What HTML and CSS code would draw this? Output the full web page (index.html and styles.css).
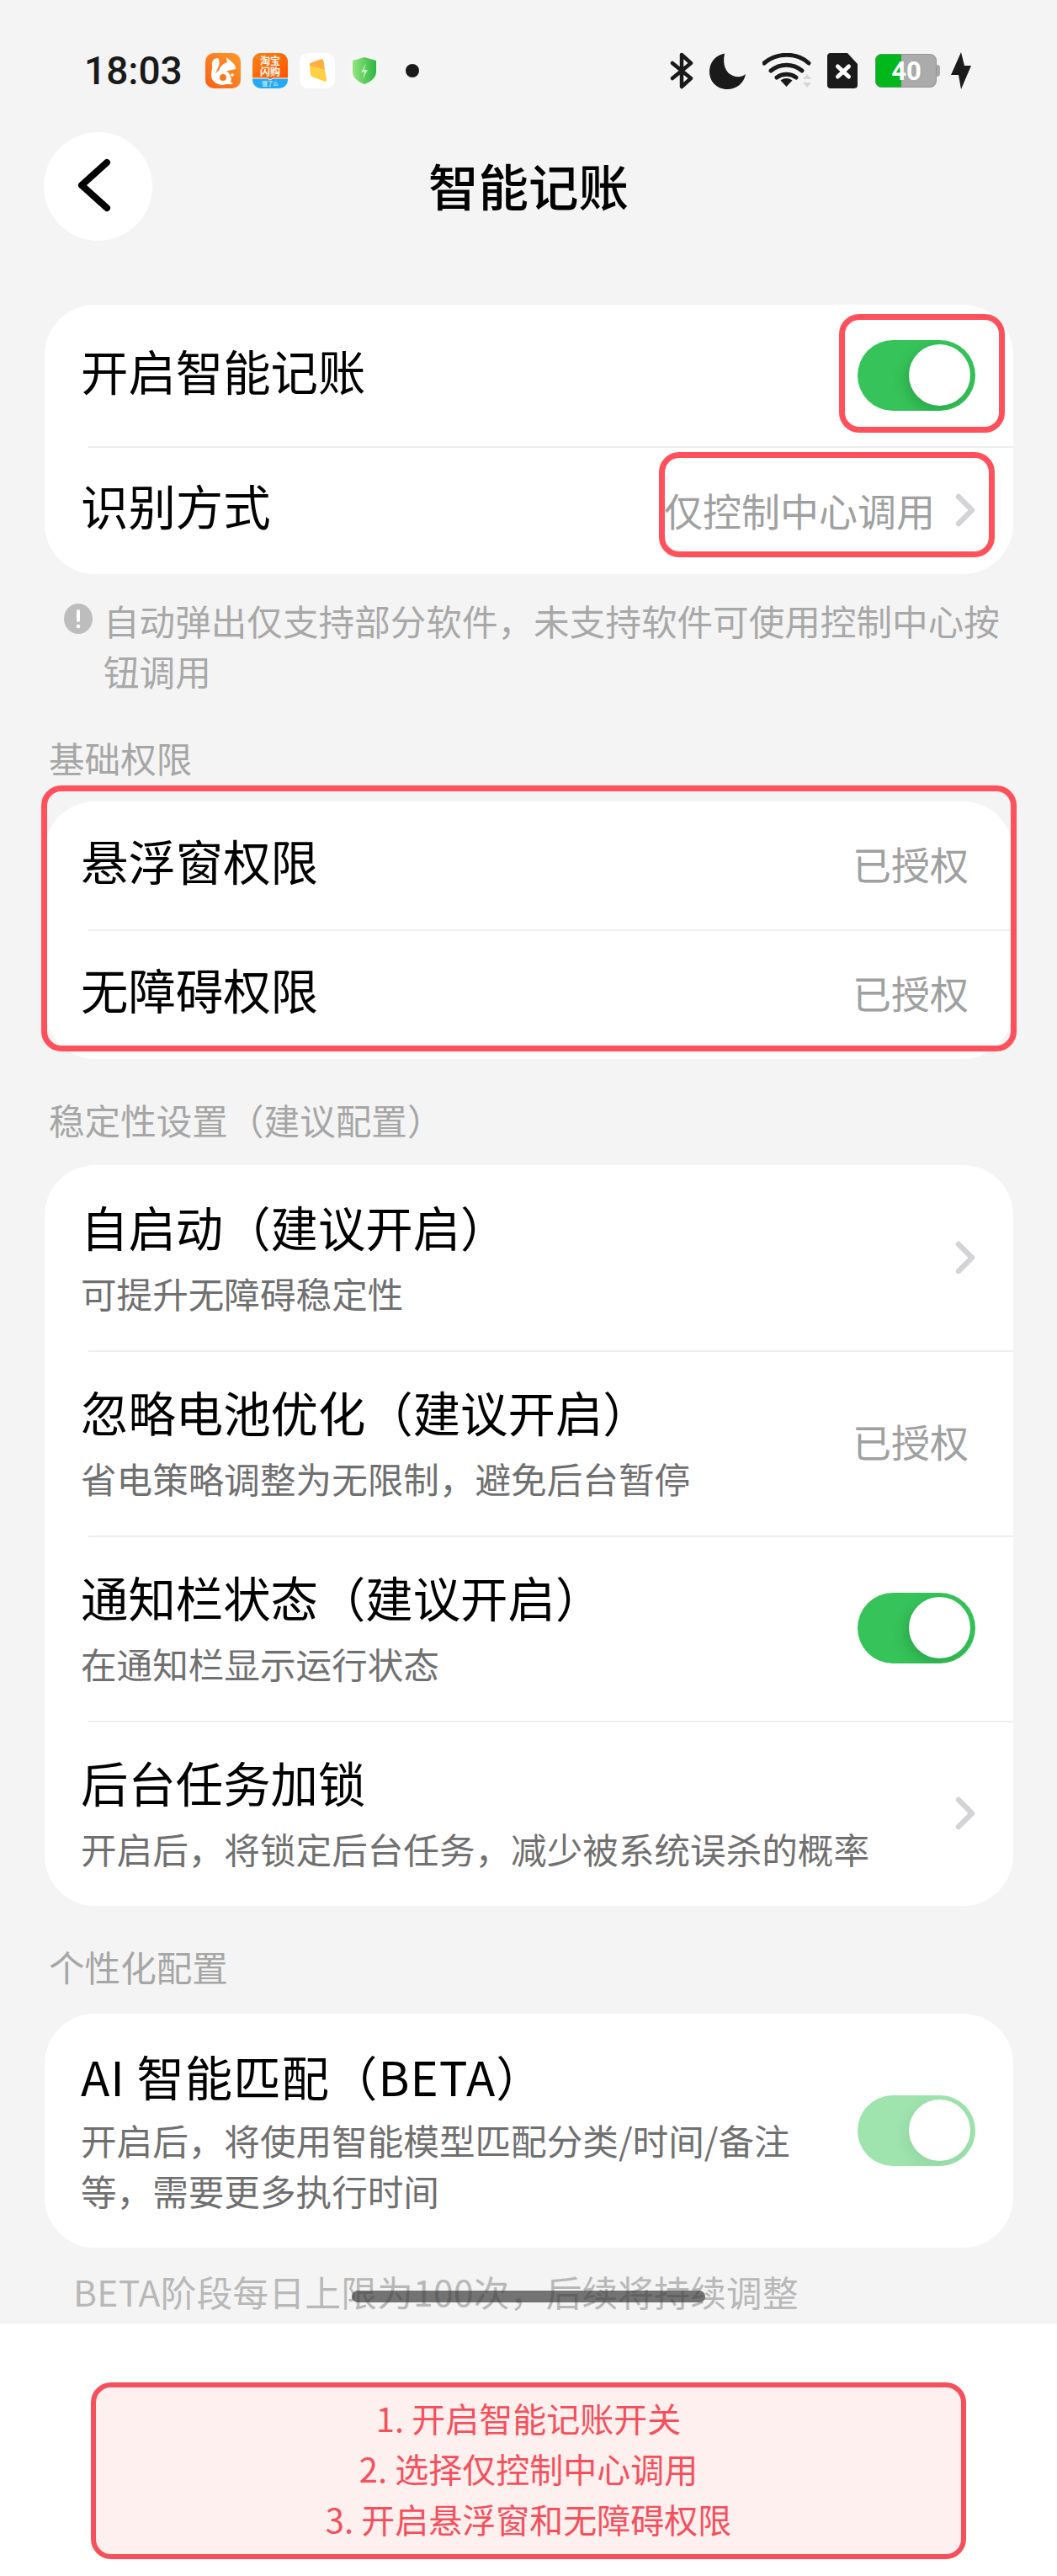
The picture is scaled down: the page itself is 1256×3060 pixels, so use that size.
FILE: index.html
```html
<!DOCTYPE html>
<html lang="zh-CN">
<head>
    <meta charset="UTF-8">
    <meta name="viewport" content="width=device-width, initial-scale=1.0">
    <title>智能记账</title>
    <link rel="stylesheet" href="styles.css">
</head>
<body>
    <div class="page">
        <div class="statusbar">
            <div class="status-left">
                <span class="time">18:03</span>
                <div class="app-icons">
                    <svg class="app-icon" viewBox="0 0 42 42">
                        <defs>
                            <linearGradient id="ucBg" x1="1" y1="0" x2="0" y2="1">
                                <stop offset="0" stop-color="#ff9a2a"/>
                                <stop offset="1" stop-color="#f8601a"/>
                            </linearGradient>
                        </defs>
                        <rect width="42" height="42" rx="10" fill="url(#ucBg)"/>
                        <path d="M15 6C10 6 7 10 8 14c1 4-1 7-1 12 0 6 4 10 10 11-3-3-5-6-5-10 0-5 3-8 4-12 1-3 1-6-1-9z" fill="#fff"/>
                        <path d="M16 21c2-6 6-9 10-10l-1-6 7 6c3 2 4 5 4 8l-9 2c-4 1-8 2-11 0z" fill="#fff"/>
                        <path d="M21 20a9 9 0 1 0 3 17h9l-3-3c1-2 1-4 0-6-1-4-5-8-9-8zm0 5a4 4 0 1 1 0 8 4 4 0 0 1 0-8z" fill="#fff"/>
                        <circle cx="32" cy="26" r="1.8" fill="#fff"/>
                    </svg>
                    <svg class="app-icon" viewBox="0 0 42 42">
                        <defs>
                            <linearGradient id="tbBg" x1="0" y1="0" x2="1" y2="1">
                                <stop offset="0" stop-color="#ff8410"/>
                                <stop offset="1" stop-color="#ff5200"/>
                            </linearGradient>
                            <clipPath id="tbClip"><rect width="42" height="42" rx="10"/></clipPath>
                        </defs>
                        <g clip-path="url(#tbClip)">
                            <rect width="42" height="42" fill="#25a9f2"/>
                            <rect width="42" height="30" fill="url(#tbBg)"/>
                            <path d="M0 30h18l3 2 3-2h18" fill="none" stroke="#fff" stroke-width="1"/>
                        </g>
                        <text class="tb-name" x="21" y="14">淘宝</text>
                        <text class="tb-name" x="21" y="27">闪购</text>
                        <text class="tb-sub" x="21" y="39">饿了么</text>
                    </svg>
                    <svg class="app-icon" viewBox="0 0 42 42">
                        <rect width="42" height="42" rx="10" fill="#fff"/>
                        <path d="M12 13.5c0-1 .5-1.500 1.500-2l11-4c2-.6 3.500 0 4 2l1.500 11-18-5.500z" fill="#fbb03f"/>
                        <path d="M12 15l18 5.500 2 10.500c.3 2-1 3-3 2.500l-13-5c-2-.7-3-1.500-3.200-3.500z" fill="#ffd03f"/>
                    </svg>
                    <svg class="app-icon" viewBox="0 0 42 42">
                        <defs>
                            <linearGradient id="shieldBg" x1="0" y1="0" x2="1" y2="0">
                                <stop offset="0" stop-color="#93e57e"/>
                                <stop offset="1" stop-color="#2db544"/>
                            </linearGradient>
                        </defs>
                        <rect width="42" height="42" rx="10" fill="#f3f6f3"/>
                        <path d="M21 5l14 4v13c0 7-6 12-14 15C13 34 7 29 7 22V9z" fill="url(#shieldBg)"/>
                        <path d="M23 12l-6 11h4l-2 8 6-11h-4z" fill="#b9f0bb"/>
                    </svg>
                </div>
                <span class="status-dot"></span>
            </div>
            <div class="status-right">
                <svg class="ic-bt" viewBox="0 0 28 44">
                    <path d="M3 13l22 18-11 10V3l11 10L3 31" fill="none" stroke="#1a1a1a" stroke-width="4.500" stroke-linejoin="round" stroke-linecap="round"/>
                </svg>
                <svg class="ic-moon" viewBox="0 0 43 43">
                    <path d="M18 .5C6 3 0 12 0 22c0 12 9 21 21 21 11 0 20-7 22-18-5 4-10 4-15 2C20 24 15 15 18 .5z" fill="#1a1a1a"/>
                </svg>
                <svg class="ic-wifi" viewBox="0 0 59 42">
                    <path d="M2 12C17-1 41-1 55 12M10 21c11-9 26-9 37 0M17 29c7-5 16-5 23 0" fill="none" stroke="#1a1a1a" stroke-width="5" stroke-linecap="round"/>
                    <path d="M28.500 30c3 0 5 1 7 2.500l-7 7.500-7-7.500c2-1.500 4-2.500 7-2.500z" fill="#1a1a1a"/>
                    <path d="M53 25l5 6H48zM48 35h10l-5 6z" fill="#d6d6d6"/>
                </svg>
                <svg class="ic-sim" viewBox="0 0 36 42">
                    <path d="M4 0h20l12 13v25c0 2.500-1.500 4-4 4H4c-2.500 0-4-1.500-4-4V4c0-2.500 1.500-4 4-4z" fill="#1a1a1a"/>
                    <path d="M12.500 16l13 12M25.500 16l-13 12" stroke="#fff" stroke-width="5" stroke-linecap="round"/>
                </svg>
                <svg class="ic-battery" viewBox="0 0 78 40">
                    <defs>
                        <clipPath id="batClip"><rect width="73" height="40" rx="8"/></clipPath>
                    </defs>
                    <path d="M73 13c3 0 4 1 4 3v8c0 2-1 3-4 3z" fill="#a9a9a9"/>
                    <g clip-path="url(#batClip)">
                        <rect width="73" height="40" fill="#ababab"/>
                        <rect width="31" height="40" fill="#00b81a"/>
                    </g>
                    <rect x=".5" y=".5" width="72" height="39" rx="8" fill="none" stroke="#888" stroke-opacity=".6"/>
                    <text class="bat-level" x="37" y="31">40</text>
                </svg>
                <svg class="ic-bolt" viewBox="0 0 24 44">
                    <path d="M12 0L0 27h9l3 17 12-28h-8z" fill="#1a1a1a"/>
                </svg>
            </div>
        </div>

        <div class="navbar">
            <div class="back-btn">
                <svg viewBox="0 0 129 129">
                    <path d="M75 36L45 63l30 27" fill="none" stroke="#000" stroke-width="8" stroke-linecap="round" stroke-linejoin="round"/>
                </svg>
            </div>
            <h1 class="nav-title">智能记账</h1>
        </div>

        <div class="card first-card">
            <div class="row row-tall">
                <span class="row-title">开启智能记账</span>
                <span class="toggle"></span>
            </div>
            <div class="row">
                <span class="row-title">识别方式</span>
                <div class="row-right">
                    <span class="row-value">仅控制中心调用</span>
                    <svg class="chevron" viewBox="0 0 24 40"><path d="M4 4l16 16L4 36" fill="none" stroke="#d4d4d8" stroke-width="6.500" stroke-linecap="round" stroke-linejoin="round"/></svg>
                </div>
            </div>
        </div>

        <div class="note">
            <svg class="note-icon" viewBox="0 0 34 36">
                <ellipse cx="17" cy="18" rx="17" ry="18" fill="#bdbdbd"/>
                <rect x="15" y="7" width="4" height="15" rx="2" fill="#fff"/>
                <circle cx="17" cy="27" r="2.300" fill="#fff"/>
            </svg>
            <p class="note-text">自动弹出仅支持部分软件，未支持软件可使用控制中心按钮调用</p>
        </div>

        <div class="section-label label-basic">基础权限</div>
        <div class="card">
            <div class="row">
                <span class="row-title">悬浮窗权限</span>
                <span class="row-value granted">已授权</span>
            </div>
            <div class="row row-last">
                <span class="row-title">无障碍权限</span>
                <span class="row-value granted">已授权</span>
            </div>
        </div>

        <div class="section-label">稳定性设置（建议配置）</div>
        <div class="card">
            <div class="row row-sub">
                <div class="row-text">
                    <div class="row-title">自启动（建议开启）</div>
                    <div class="row-desc">可提升无障碍稳定性</div>
                </div>
                <svg class="chevron" viewBox="0 0 24 40"><path d="M4 4l16 16L4 36" fill="none" stroke="#d4d4d8" stroke-width="6.500" stroke-linecap="round" stroke-linejoin="round"/></svg>
            </div>
            <div class="row row-sub">
                <div class="row-text">
                    <div class="row-title">忽略电池优化（建议开启）</div>
                    <div class="row-desc">省电策略调整为无限制，避免后台暂停</div>
                </div>
                <span class="row-value granted">已授权</span>
            </div>
            <div class="row row-sub">
                <div class="row-text">
                    <div class="row-title">通知栏状态（建议开启）</div>
                    <div class="row-desc">在通知栏显示运行状态</div>
                </div>
                <span class="toggle"></span>
            </div>
            <div class="row row-sub">
                <div class="row-text">
                    <div class="row-title">后台任务加锁</div>
                    <div class="row-desc">开启后，将锁定后台任务，减少被系统误杀的概率</div>
                </div>
                <svg class="chevron" viewBox="0 0 24 40"><path d="M4 4l16 16L4 36" fill="none" stroke="#d4d4d8" stroke-width="6.500" stroke-linecap="round" stroke-linejoin="round"/></svg>
            </div>
        </div>

        <div class="section-label label-custom">个性化配置</div>
        <div class="card">
            <div class="row row-ai">
                <div class="row-text text-ai">
                    <div class="row-title title-ai">AI 智能匹配（BETA）</div>
                    <div class="row-desc desc-wrap">开启后，将使用智能模型匹配分类/时间/备注等，需要更多执行时间</div>
                </div>
                <span class="toggle toggle-dim"></span>
            </div>
        </div>

        <div class="beta-note">BETA阶段每日上限为100次，后续将持续调整</div>

        <div class="bottom-panel">
            <div class="steps">
                <div>1. 开启智能记账开关</div>
                <div>2. 选择仅控制中心调用</div>
                <div>3. 开启悬浮窗和无障碍权限</div>
            </div>
        </div>

        <!-- red marks drawn over the screenshot -->
        <div class="mark mark-toggle"></div>
        <div class="mark mark-mode"></div>
        <div class="mark mark-perms"></div>
        <div class="home-bar"></div>
    </div>
</body>
</html>
```

FILE: styles.css
```css
* {
    box-sizing: border-box;
}

body {
    margin: 0;
    padding: 0;
    background-color: #f4f4f4;
    font-family: "Noto Sans CJK SC", "Noto Sans", sans-serif;
}

.page {
    position: relative;
    width: 1256px;
    height: 3060px;
    overflow: hidden;
    background-color: #f4f4f4;
}

/* status bar */
.statusbar {
    display: flex;
    justify-content: space-between;
    padding: 63px 102px 0 100px;
    height: 105px;
}

.status-left {
    display: flex;
    align-items: center;
    height: 42px;
}

.time {
    width: 144px;
    font-family: Roboto, sans-serif;
    font-size: 46px;
    font-weight: 500;
    line-height: 42px;
    color: #1a1a1a;
}

.app-icons {
    display: flex;
    gap: 14px;
}

.app-icon {
    display: block;
    width: 42px;
    height: 42px;
}

.tb-name {
    font-size: 12px;
    font-weight: 700;
    fill: #fff;
    text-anchor: middle;
}

.tb-sub {
    font-size: 6.500px;
    fill: #fff;
    text-anchor: middle;
}

.status-dot {
    width: 16px;
    height: 16px;
    margin-left: 28px;
    border-radius: 50%;
    background-color: #1a1a1a;
}

.status-right {
    display: flex;
    align-items: center;
    height: 42px;
}

.status-right svg {
    display: block;
    flex: none;
}

.ic-bt {
    width: 28px;
    height: 44px;
}

.ic-moon {
    width: 43px;
    height: 43px;
    margin-left: 19px;
}

.ic-wifi {
    width: 59px;
    height: 42px;
    margin-left: 20px;
}

.ic-sim {
    width: 36px;
    height: 42px;
    margin-left: 18px;
}

.ic-battery {
    width: 78px;
    height: 40px;
    margin-left: 21px;
}

.bat-level {
    font-family: Roboto, sans-serif;
    font-size: 31px;
    font-weight: 700;
    fill: #fff;
    text-anchor: middle;
}

.ic-bolt {
    width: 24px;
    height: 44px;
    margin-left: 12px;
}

/* nav */
.navbar {
    display: grid;
    grid-template-columns: 129px 1fr 129px;
    align-items: center;
    margin-top: 52px;
    padding: 0 52px;
    height: 129px;
}

.back-btn {
    width: 129px;
    height: 129px;
    border-radius: 50%;
    background-color: #fff;
}

.back-btn svg {
    display: block;
    width: 129px;
    height: 129px;
}

.nav-title {
    margin: 0;
    padding-bottom: 4px;
    font-size: 59.5px;
    font-weight: 500;
    line-height: 125px;
    text-align: center;
    color: #000;
}

/* cards */
.card {
    margin: 0 52px 0 53px;
    border-radius: 60px;
    background-color: #fff;
}

.first-card {
    margin-top: 76px;
}

.row {
    position: relative;
    display: flex;
    justify-content: space-between;
    align-items: center;
    height: 152px;
    padding: 0 45px 0 43px;
}

.row + .row::before {
    content: '';
    position: absolute;
    top: 0;
    left: 52px;
    right: 0;
    height: 2px;
    background-color: #eeeeee;
}

.row-tall {
    height: 168px;
}

.row-last {
    height: 154px;
}

.row-sub {
    height: 220px;
}

.row-ai {
    height: 278px;
}

.row-title {
    padding-bottom: 12px;
    font-size: 56.4px;
    line-height: 78px;
    color: #000;
}

.row-text {
    padding-bottom: 5px;
}

.text-ai {
    padding-bottom: 4px;
}

.row-text .row-title {
    padding-bottom: 0;
}

.title-ai {
    letter-spacing: 1px;
}

.row-desc {
    margin-top: 10px;
    font-size: 42.6px;
    line-height: 60px;
    color: #707070;
}

.desc-wrap {
    margin-top: 7px;
    max-width: 860px;
}

.row-right {
    display: flex;
    align-items: center;
    gap: 24px;
}

.row-value {
    padding-bottom: 3px;
    font-size: 46px;
    line-height: 60px;
    color: #a0a0a0;
}

.granted {
    margin-right: 8px;
    padding-bottom: 6px;
}

.chevron {
    display: block;
    flex: none;
    width: 24px;
    height: 40px;
}

.toggle {
    position: relative;
    flex: none;
    width: 140px;
    height: 84px;
    border-radius: 42px;
    overflow: hidden;
    background-color: #36c45a;
}

.toggle::after {
    content: '';
    position: absolute;
    top: 5px;
    right: 6px;
    width: 73px;
    height: 73px;
    border-radius: 50%;
    background-color: #fff;
    box-shadow: -4px 6px 16px rgba(0, 70, 20, 0.22);
}

.toggle-dim {
    background-color: #9fe3ae;
}

.toggle-dim::after {
    box-shadow: -4px 6px 16px rgba(0, 70, 20, 0.08);
}

/* notes and labels */
.note {
    display: flex;
    align-items: flex-start;
    margin-top: 25px;
    padding-left: 76px;
}

.note-icon {
    display: block;
    flex: none;
    width: 34px;
    height: 36px;
    margin-top: 10px;
}

.note-text {
    width: 1080px;
    margin: 0 0 0 13px;
    font-size: 42.6px;
    line-height: 60px;
    color: #a8a8a8;
}

.section-label {
    margin-top: 42px;
    margin-bottom: 24px;
    padding-left: 58px;
    font-size: 42.6px;
    line-height: 60px;
    color: #a6a6a6;
}

.label-basic {
    margin-top: 43px;
    margin-bottom: 22px;
}

.label-custom {
    margin-bottom: 26px;
}

.beta-note {
    margin-top: 22px;
    padding-left: 87px;
    font-size: 42.6px;
    letter-spacing: 0.3px;
    line-height: 60px;
    color: #b8b8b8;
}

/* bottom tips */
.bottom-panel {
    margin-top: 8px;
    height: 300px;
    padding: 70px 108px 0 108px;
    background-color: #fff;
}

.steps {
    height: 210px;
    padding: 6px 0 12px;
    border: 6px solid #f5505c;
    border-radius: 24px;
    background-color: #fff0f0;
    font-size: 40px;
    line-height: 60px;
    text-align: center;
    color: #f5505c;
}

/* overlays */
.mark {
    position: absolute;
    border: 7px solid #ff505c;
    border-radius: 24px;
}

.mark-toggle {
    top: 373px;
    left: 997px;
    width: 197px;
    height: 141px;
}

.mark-mode {
    top: 537px;
    left: 783px;
    width: 399px;
    height: 125px;
}

.mark-perms {
    top: 933px;
    left: 49px;
    width: 1159px;
    height: 316px;
}

.home-bar {
    position: absolute;
    top: 2721px;
    left: 418px;
    width: 420px;
    height: 14px;
    border-radius: 7px;
    background-color: rgba(60, 60, 60, 0.7);
}
```
